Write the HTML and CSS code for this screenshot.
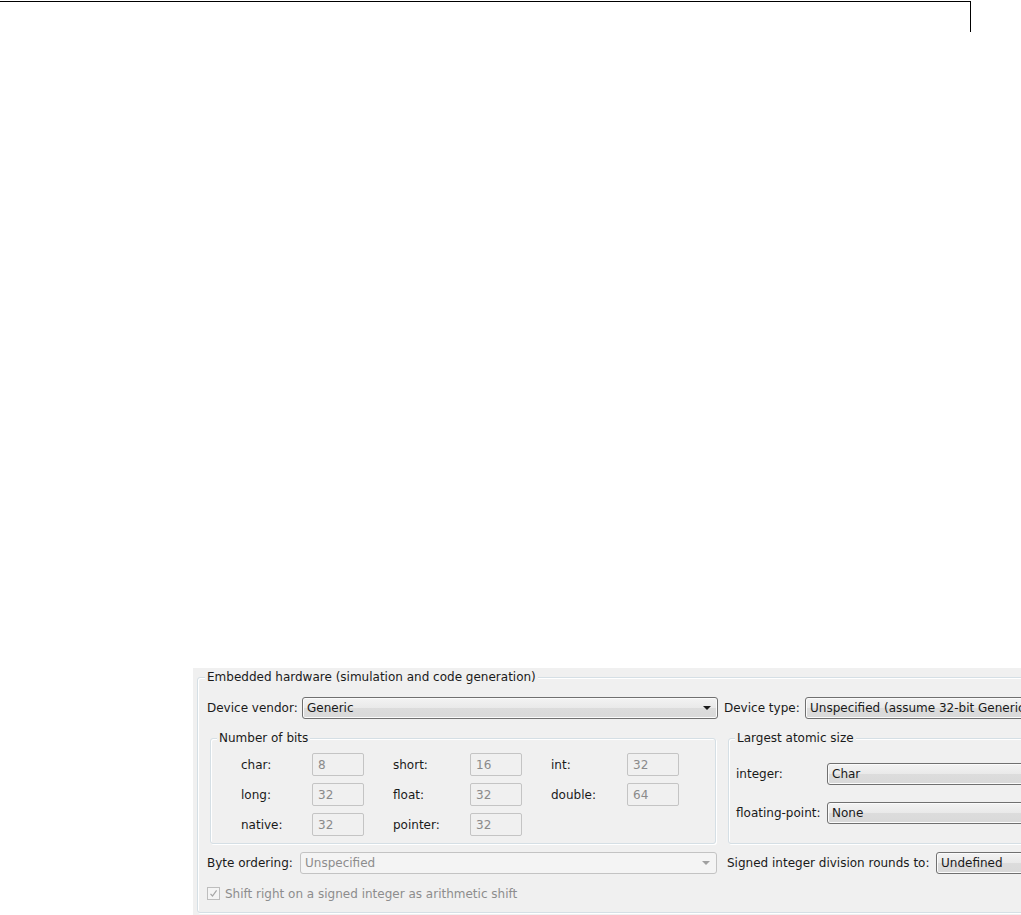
FILE: index.html
```html
<!DOCTYPE html>
<html lang="en">
<head>
<meta charset="utf-8">
<title>Embedded hardware</title>
<link rel="stylesheet" href="styles.css">
</head>
<body>
<div class="topframe"></div>
<div class="panel">
  <div class="group outer">
    <span class="legend">Embedded hardware (simulation and code generation)</span>
    <div class="row row-device">
      <span class="lbl lbl-vendor">Device vendor:</span>
      <div class="select sel-vendor"><span class="val">Generic</span><span class="arrow"></span></div>
      <span class="lbl lbl-type">Device type:</span>
      <div class="select sel-type"><span class="val">Unspecified (assume 32-bit Generic)</span><span class="arrow"></span></div>
    </div>
    <div class="row row-groups">
      <div class="group bits">
        <span class="legend">Number of bits</span>
        <div class="bits-grid">
          <span class="lbl">char:</span><span class="field">8</span>
          <span class="lbl mid">short:</span><span class="field">16</span>
          <span class="lbl mid">int:</span><span class="field">32</span>
          <span class="lbl">long:</span><span class="field">32</span>
          <span class="lbl mid">float:</span><span class="field">32</span>
          <span class="lbl mid">double:</span><span class="field">64</span>
          <span class="lbl">native:</span><span class="field">32</span>
          <span class="lbl mid">pointer:</span><span class="field">32</span>
        </div>
      </div>
      <div class="group atomic">
        <span class="legend">Largest atomic size</span>
        <div class="atomic-row">
          <span class="lbl lbl-atomic">integer:</span>
          <div class="select sel-atomic"><span class="val">Char</span><span class="arrow"></span></div>
        </div>
        <div class="atomic-row second">
          <span class="lbl lbl-atomic">floating-point:</span>
          <div class="select sel-atomic"><span class="val">None</span><span class="arrow"></span></div>
        </div>
      </div>
    </div>
    <div class="row row-byte">
      <span class="lbl lbl-byte">Byte ordering:</span>
      <div class="select disabled sel-byte"><span class="val">Unspecified</span><span class="arrow"></span></div>
      <span class="lbl lbl-signed">Signed integer division rounds to:</span>
      <div class="select sel-signed"><span class="val">Undefined</span><span class="arrow"></span></div>
    </div>
    <div class="row row-check">
      <span class="checkbox"><svg width="11" height="11" viewBox="0 0 11 11"><path d="M2.5 5.8 L4.5 8 L8.6 2.4" fill="none" stroke="#a6a6a6" stroke-width="1.2"/></svg></span>
      <span class="check-text">Shift right on a signed integer as arithmetic shift</span>
    </div>
  </div>
</div>
</body>
</html>
```

FILE: styles.css
```css
html, body {
  margin: 0;
  padding: 0;
  background: #ffffff;
}
body {
  padding-top: 1px;
  display: flex;
  flex-direction: column;
  font-family: "DejaVu Sans", "Liberation Sans", sans-serif;
  font-size: 12px;
  color: #1a1a1a;
}
.topframe {
  width: 971px;
  height: 31px;
  box-sizing: border-box;
  border-top: 1px solid #000;
  border-right: 1px solid #000;
}
.panel {
  margin-top: 636px;
  margin-left: 193px;
  width: 828px;
  height: 247px;
  box-sizing: border-box;
  background: #f0f0f0;
  padding: 9px 0 0 4px;
  overflow: hidden;
}
.group {
  position: relative;
  box-sizing: border-box;
  border: 1px solid #d5dfe5;
  border-radius: 3px;
  box-shadow: inset 1px 1px 0 #ffffff, 1px 1px 0 #ffffff;
}
.legend {
  position: absolute;
  top: -8px;
  left: 7px;
  padding: 0 2px;
  line-height: 15px;
  background: #f0f0f0;
  white-space: nowrap;
}
.outer {
  width: 1000px;
  height: 236px;
  padding-top: 19px;
}
.row {
  display: flex;
  align-items: center;
  white-space: nowrap;
}
.lbl {
  white-space: nowrap;
}
.row-device {
  padding-left: 9px;
  height: 22px;
}
.lbl-vendor { width: 95px; }
.lbl-type { width: 81px; margin-left: 6px; }
.select {
  position: relative;
  box-sizing: border-box;
  height: 22px;
  border: 1px solid #707070;
  border-radius: 3px;
  background: linear-gradient(#f3f3f3, #e9e9e9 50%, #dcdcdc 51%, #d9d9d9);
  box-shadow: inset 0 0 0 1px #fbfbfb;
  display: flex;
  align-items: center;
  padding-left: 4px;
  overflow: hidden;
  white-space: nowrap;
}
.select .arrow {
  position: absolute;
  right: 6px;
  top: 8px;
  width: 0;
  height: 0;
  border-left: 4px solid transparent;
  border-right: 4px solid transparent;
  border-top: 4px solid #1a1a1a;
}
.select.disabled {
  background: #f4f4f4;
  border-color: #c3c3c3;
  box-shadow: none;
  color: #8d8d8d;
}
.select.disabled .arrow {
  border-top-color: #a0a0a0;
}
.sel-vendor { width: 416px; }
.sel-type { width: 300px; }
.row-groups {
  margin-top: 19px;
  padding-left: 12px;
  align-items: flex-start;
}
.bits {
  width: 506px;
  height: 106px;
  padding: 14px 0 0 30px;
}
.bits .legend { left: 6px; }
.bits-grid {
  display: grid;
  grid-template-columns: 71px 52px 106px 52px 105px 52px;
  grid-auto-rows: 23px;
  row-gap: 7px;
  align-items: center;
}
.bits-grid .mid { padding-left: 29px; }
.field {
  box-sizing: border-box;
  height: 23px;
  border: 1px solid #c4c4c4;
  border-radius: 2px;
  background: #f0f0f0;
  color: #8a8a8a;
  padding-left: 5px;
  display: flex;
  align-items: center;
}
.atomic {
  margin-left: 12px;
  width: 400px;
  height: 106px;
  padding: 24px 0 0 7px;
}
.atomic .legend { left: 6px; }
.atomic-row {
  display: flex;
  align-items: center;
  height: 22px;
}
.atomic-row.second { margin-top: 17px; }
.lbl-atomic { width: 91px; }
.sel-atomic { width: 300px; }
.row-byte {
  margin-top: 8px;
  padding-left: 9px;
  height: 22px;
}
.lbl-byte { width: 93px; }
.sel-byte { width: 417px; }
.lbl-signed { width: 209px; margin-left: 10px; }
.sel-signed { width: 200px; }
.row-check {
  margin-top: 13px;
  padding-left: 9px;
  height: 13px;
}
.checkbox {
  box-sizing: border-box;
  width: 13px;
  height: 13px;
  border: 1px solid #bdbdbd;
  background: #f4f4f4;
  display: flex;
  align-items: center;
  justify-content: center;
}
.check-text {
  margin-left: 5px;
  color: #8d8d8d;
}
```
